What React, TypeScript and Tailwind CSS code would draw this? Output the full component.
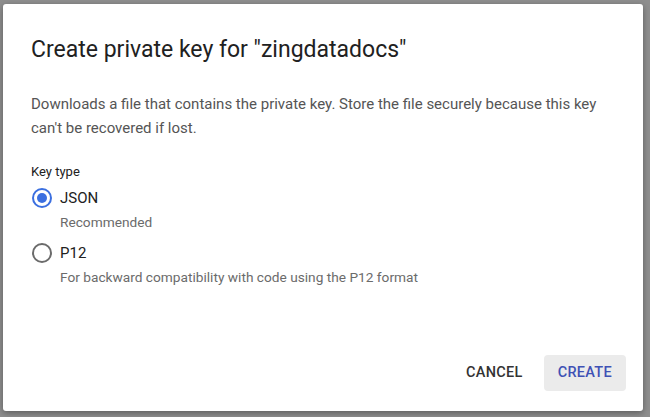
import type React from "react"

const Radio: React.FC<{ checked?: boolean }> = ({ checked }) => (
  <span
    className={`flex h-[20px] w-[20px] shrink-0 items-center justify-center rounded-full border-2 ${
      checked ? "border-[#3b6fe0]" : "border-[#6b6b6b]"
    }`}
  >
    {checked && <span className="h-[10px] w-[10px] rounded-full bg-[#3b6fe0]" />}
  </span>
)

const options = [
  { label: "JSON", hint: "Recommended", checked: true },
  { label: "P12", hint: "For backward compatibility with code using the P12 format", checked: false },
]

export default function App() {
  return (
    <div
      className="h-[417px] w-[650px] bg-[#8e8e8e] pl-[3px] pt-[4px]"
      style={{ fontFamily: "Roboto, 'Noto Sans', sans-serif" }}
    >
      <div className="flex h-[407px] w-[640px] flex-col rounded-[3px] bg-white shadow-[0_2px_6px_rgba(0,0,0,0.35)]">
        <div className="pl-[28px] pr-[30px] pt-[31px]">
          <h1 className="text-[23px] leading-[30px] text-[#212121]">Create private key for "zingdatadocs"</h1>
          <p className="mt-[27px] text-[15px] leading-[24px] text-[#555]">
            Downloads a file that contains the private key. Store the file securely because this key can't be
            recovered if lost.
          </p>
          <div className="mt-[24px] text-[13px] leading-[16px] text-[#212121]">Key type</div>
          <div className="mt-[6px] flex flex-col">
            {options.map((o) => (
              <div key={o.label} className="mb-[7px]">
                <div className="flex h-[24px] items-center gap-[8px] pl-[1px]">
                  <Radio checked={o.checked} />
                  <span className="text-[15px] leading-[24px] text-[#212121]">{o.label}</span>
                </div>
                <div className="pl-[29px] text-[13.7px] leading-[24px] text-[#6b6b6b]">{o.hint}</div>
              </div>
            ))}
          </div>
        </div>
        <div className="mt-auto flex justify-end gap-[6px] px-[17px] pb-[20px]">
          <button className="h-[36px] rounded-[4px] px-[15px] text-[14.5px] font-medium tracking-[0.3px] text-[#333]">
            CANCEL
          </button>
          <button className="h-[36px] rounded-[4px] bg-[#ebebeb] px-[14px] text-[14.5px] font-medium tracking-[0.3px] text-[#3f51b5]">
            CREATE
          </button>
        </div>
      </div>
    </div>
  )
}
